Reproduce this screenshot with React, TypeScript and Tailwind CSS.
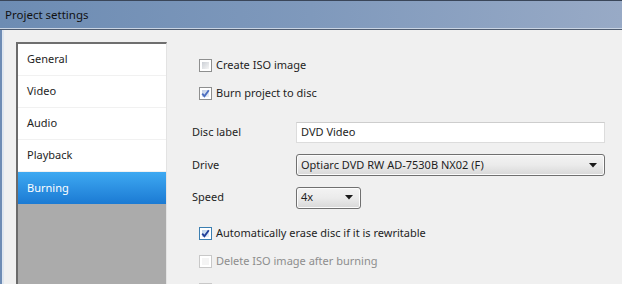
import React from "react";

const font = { fontFamily: '"Noto Sans", "Open Sans", sans-serif' };

function Check({ checked, disabled, tone }: { checked?: boolean; disabled?: boolean; tone?: "light" | "dark" }) {
  const border = disabled ? "border-[#c8c8c8]" : tone === "dark" ? "border-[#3c7fb1]" : "border-[#8e8f8f]";
  const inner = disabled
    ? "bg-[#f4f4f4]"
    : tone === "light"
    ? "bg-gradient-to-br from-[#c3d0e6] to-[#eef2f8]"
    : tone === "dark"
    ? "bg-gradient-to-br from-[#bcd3ea] to-[#eaf2fb]"
    : "bg-gradient-to-br from-[#cbcfd5] to-[#f6f6f6]";
  return (
    <div className={`w-[13px] h-[13px] border ${border} bg-white p-[2px] flex-none`}>
      <div className={`w-full h-full flex items-center justify-center ${inner}`}>
        {checked && (
          <svg width="9" height="9" viewBox="0 0 9 9" className="-m-[1px]">
            <path
              d="M1.2 4.6 L3.4 7.2 L7.8 1.2"
              fill="none"
              stroke={tone === "dark" ? "#21409a" : "#4d6fc0"}
              strokeWidth="1.9"
            />
          </svg>
        )}
      </div>
    </div>
  );
}

function CheckRow({ label, checked, disabled, tone }: { label: string; checked?: boolean; disabled?: boolean; tone?: "light" | "dark" }) {
  return (
    <div className="h-[20px] flex-none flex items-center pl-[7px] gap-[4px]">
      <Check checked={checked} disabled={disabled} tone={tone} />
      <span className={`text-[11px] ${disabled ? "text-[#8d8d8d]" : "text-[#1e1e1e]"}`}>{label}</span>
    </div>
  );
}

function Arrow() {
  return (
    <svg width="8" height="5" viewBox="0 0 8 5">
      <path d="M0 0 H8 L4 4.5 Z" fill="#1a1a1a" />
    </svg>
  );
}

function Dropdown({ value, w }: { value: string; w: string }) {
  return (
    <div
      className={`${w} h-[22px] rounded-[3px] border border-[#707070] bg-gradient-to-b from-[#f3f3f3] via-[#ebebeb] to-[#d8d8d8] flex items-center justify-between pl-[4px] pr-[7px] shadow-[inset_0_0_0_1px_#fcfcfc]`}
    >
      <span className="text-[11px] text-[#1e1e1e]">{value}</span>
      <Arrow />
    </div>
  );
}

const items = ["General", "Video", "Audio", "Playback", "Burning"];

export default function App() {
  return (
    <div className="w-[622px] h-[284px] overflow-hidden flex flex-col bg-[#f0f0f0]" style={font}>
      {/* Title bar */}
      <div className="h-[30px] flex-none flex flex-col">
        <div className="h-[1px] bg-[#3a4659]" />
        <div className="flex-1 bg-gradient-to-r from-[#6d8cb3] via-[#7f99bc] to-[#98aac6] flex items-center pl-[5px]">
          <span className="text-[11.5px] text-[#111] leading-none">Project settings</span>
        </div>
        <div className="h-[1px] bg-[#c9d4e3]" />
        <div className="h-[1px] bg-[#4f5c70]" />
      </div>
      {/* Body */}
      <div className="flex-1 flex min-h-0">
        <div className="w-[2px] bg-[#6e8cb4] flex-none" />
        <div className="w-[2px] bg-[#dfe6ef] flex-none" />
        <div className="flex-1 flex bg-[#f0f0f0] pl-[12px] pt-[12px]">
          {/* Sidebar */}
          <div className="w-[151px] flex-none flex flex-col border-l-2 border-t-2 border-l-[#6b6b6b] border-t-[#6f6f6f] border-r border-r-[#e3e3e3] bg-[#ababab]">
            {items.map((it) => {
              const sel = it === "Burning";
              return (
                <div
                  key={it}
                  className={`h-[32px] flex-none flex items-center pl-[9px] text-[11px] ${
                    sel
                      ? "bg-gradient-to-b from-[#3ea9f2] to-[#1b7ad3] text-white"
                      : "bg-white text-[#1e1e1e] border-b border-[#f1f1f1]"
                  }`}
                >
                  {it}
                </div>
              );
            })}
          </div>
          {/* Right content */}
          <div className="flex-1 flex flex-col pl-[25px] pt-[13px]">
            <CheckRow label="Create ISO image" />
            <div className="h-[8px] flex-none" />
            <CheckRow label="Burn project to disc" checked tone="light" />
            <div className="h-[19px] flex-none" />
            <div className="flex flex-none items-center h-[21px]">
              <span className="w-[104px] text-[11px] text-[#1e1e1e]">Disc label</span>
              <div className="w-[309px] h-[21px] bg-white border border-[#dcdcdc] border-t-[#cdcdcd] flex items-center pl-[4px]">
                <span className="text-[11px] text-[#1e1e1e]">DVD Video</span>
              </div>
            </div>
            <div className="h-[11px] flex-none" />
            <div className="flex flex-none items-center h-[22px]">
              <span className="w-[104px] text-[11px] text-[#1e1e1e]">Drive</span>
              <Dropdown value="Optiarc DVD RW AD-7530B NX02 (F)" w="w-[309px]" />
            </div>
            <div className="h-[11px] flex-none" />
            <div className="flex flex-none items-center h-[21px]">
              <span className="w-[104px] text-[11px] text-[#1e1e1e]">Speed</span>
              <Dropdown value="4x" w="w-[65px]" />
            </div>
            <div className="h-[15px] flex-none" />
            <CheckRow label="Automatically erase disc if it is rewritable" checked tone="dark" />
            <div className="h-[8px] flex-none" />
            <CheckRow label="Delete ISO image after burning" disabled />
            <div className="h-[8px] flex-none" />
            <CheckRow label="" disabled />
          </div>
        </div>
      </div>
    </div>
  );
}
